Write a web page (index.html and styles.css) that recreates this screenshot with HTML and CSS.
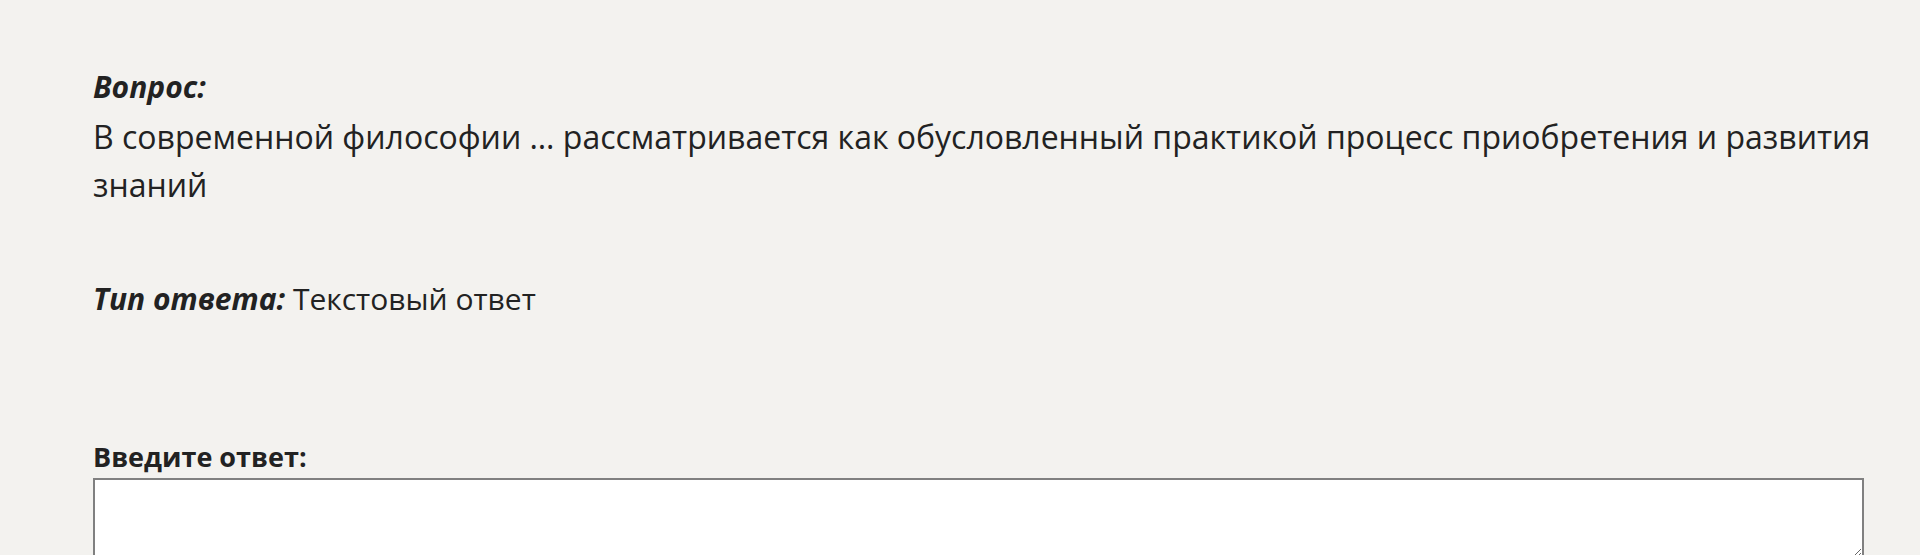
FILE: index.html
```html
<!DOCTYPE html>
<html lang="ru">
  <head>
    <meta charset="UTF-8" />
    <meta name="viewport" content="width=device-width, initial-scale=1.0" />
    <title>Вопрос</title>
    <link rel="stylesheet" href="styles.css">
  </head>
  <body>
    <div class="task">
      <div class="question">
        <div class="question-label">Вопрос:</div>
        <div class="question-text">
          В современной философии … рассматривается как обусловленный практикой процесс приобретения и развития знаний
        </div>
      </div>

      <div class="answer-type">
        <span class="answer-type-label">Тип ответа:</span> Текстовый ответ
      </div>

      <form class="answer-form">
        <label class="answer-label" for="answer">Введите ответ:</label>
        <textarea id="answer" class="answer-input"></textarea>
      </form>
    </div>
  </body>
</html>
```

FILE: styles.css
```css
* {
  box-sizing: border-box;
}
body {
  margin: 0;
  background-color: #f3f2ef;
  color: #222;
  font-family: "Open Sans", "Noto Sans", sans-serif;
}
.task {
  width: 1780px;
  padding: 63px 0 0 93px;
  box-sizing: content-box;
}
.question {
  font-size: 30px;
  line-height: 48px;
}
.question-label {
  font-style: italic;
  font-weight: bold;
}
.question-text {
  margin-top: 2px;
  font-size: 32px;
  line-height: 48px;
}
/* тип ответа */
.answer-type {
  margin-top: 66px;
  font-size: 30px;
  line-height: 48px;
}
.answer-type-label {
  font-style: italic;
  font-weight: bold;
}
/* поле ответа */
.answer-form {
  margin-top: 118px;
}
.answer-label {
  display: block;
  font-size: 27px;
  line-height: 32px;
  font-weight: bold;
}
.answer-input {
  display: block;
  margin-top: 5px;
  width: 1771px;
  height: 81px;
  border: 2px solid #808080;
  background: #fff;
  font-family: inherit;
  font-size: 26px;
}
```
